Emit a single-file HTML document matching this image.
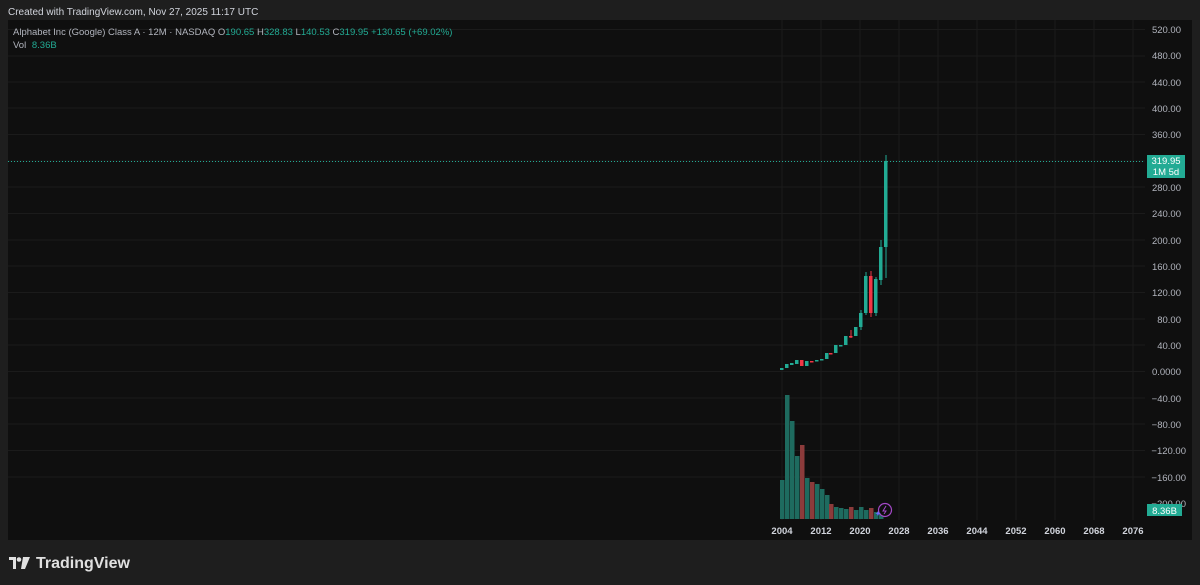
<!DOCTYPE html>
<html><head><style>
html,body{margin:0;padding:0;background:#1e1e1e;width:1200px;height:585px;overflow:hidden;font-family:"Liberation Sans",sans-serif}
</style></head><body>
<svg width="1200" height="585" xmlns="http://www.w3.org/2000/svg" font-family="Liberation Sans, sans-serif">
<rect width="1200" height="585" fill="#1e1e1e"/>
<text x="8" y="15" font-size="10" fill="#d1d4dc">Created with TradingView.com, Nov 27, 2025 11:17 UTC</text>
<rect x="8" y="20" width="1184" height="520" fill="#0f0f0f"/>
<g stroke="#1b1b1b" stroke-width="1">
<line x1="8" y1="29.5" x2="1145" y2="29.5"/><line x1="8" y1="56" x2="1145" y2="56"/><line x1="8" y1="82" x2="1145" y2="82"/><line x1="8" y1="108" x2="1145" y2="108"/><line x1="8" y1="134.5" x2="1145" y2="134.5"/><line x1="8" y1="161" x2="1145" y2="161"/><line x1="8" y1="187" x2="1145" y2="187"/><line x1="8" y1="213.5" x2="1145" y2="213.5"/><line x1="8" y1="240" x2="1145" y2="240"/><line x1="8" y1="266" x2="1145" y2="266"/><line x1="8" y1="292.5" x2="1145" y2="292.5"/><line x1="8" y1="319" x2="1145" y2="319"/><line x1="8" y1="345" x2="1145" y2="345"/><line x1="8" y1="371.5" x2="1145" y2="371.5"/><line x1="8" y1="398" x2="1145" y2="398"/><line x1="8" y1="424" x2="1145" y2="424"/><line x1="8" y1="450.5" x2="1145" y2="450.5"/><line x1="8" y1="477" x2="1145" y2="477"/>
<line x1="782" y1="20" x2="782" y2="520"/><line x1="821" y1="20" x2="821" y2="520"/><line x1="860" y1="20" x2="860" y2="520"/><line x1="899" y1="20" x2="899" y2="520"/><line x1="938" y1="20" x2="938" y2="520"/><line x1="977" y1="20" x2="977" y2="520"/><line x1="1016" y1="20" x2="1016" y2="520"/><line x1="1055" y1="20" x2="1055" y2="520"/><line x1="1094" y1="20" x2="1094" y2="520"/><line x1="1133" y1="20" x2="1133" y2="520"/>
</g>
<text x="13" y="35" font-size="9.5" fill="#b2b5be">Alphabet Inc (Google) Class A · 12M · NASDAQ <tspan>O</tspan><tspan fill="#22ab94">190.65</tspan> H<tspan fill="#22ab94">328.83</tspan> L<tspan fill="#22ab94">140.53</tspan> C<tspan fill="#22ab94">319.95 +130.65 (+69.02%)</tspan></text>
<text x="13" y="48" font-size="9.5" fill="#b2b5be">Vol <tspan fill="#22ab94" dx="3">8.36B</tspan></text>
<g>
<rect x="780" y="480" width="4.5" height="39" fill="#1e6b5f"/>
<rect x="785" y="395" width="4.5" height="124" fill="#1e6b5f"/>
<rect x="790" y="421" width="4.5" height="98" fill="#1e6b5f"/>
<rect x="795" y="456" width="4.5" height="63" fill="#1e6b5f"/>
<rect x="800" y="445" width="4.5" height="74" fill="#8c3b3b"/>
<rect x="805" y="478" width="4.5" height="41" fill="#1e6b5f"/>
<rect x="810" y="482" width="4.5" height="37" fill="#8c3b3b"/>
<rect x="815" y="484" width="4.5" height="35" fill="#1e6b5f"/>
<rect x="820" y="489" width="4.5" height="30" fill="#1e6b5f"/>
<rect x="825" y="495" width="4.5" height="24" fill="#1e6b5f"/>
<rect x="829" y="504" width="4.5" height="15" fill="#8c3b3b"/>
<rect x="834" y="507" width="4.5" height="12" fill="#1e6b5f"/>
<rect x="839" y="508" width="4.5" height="11" fill="#1e6b5f"/>
<rect x="844" y="509" width="4.5" height="10" fill="#1e6b5f"/>
<rect x="849" y="507" width="4.5" height="12" fill="#8c3b3b"/>
<rect x="854" y="510" width="4.5" height="9" fill="#1e6b5f"/>
<rect x="859" y="507" width="4.5" height="12" fill="#1e6b5f"/>
<rect x="864" y="510" width="4.5" height="9" fill="#1e6b5f"/>
<rect x="869" y="508" width="4.5" height="11" fill="#8c3b3b"/>
<rect x="874" y="512" width="4.5" height="7" fill="#1e6b5f"/>
<rect x="879" y="513" width="4.5" height="6" fill="#1e6b5f"/>
</g>
<circle cx="885" cy="510" r="6.5" fill="#0f0f0f" stroke="#a448c8" stroke-width="1.2"/>
<path d="M886 506 L883 511 L886 511 L884 514" stroke="#a448c8" fill="none" stroke-width="1"/>
<path d="M877 513 l1 -2 l1 2 l2 0.5 l-2 0.5 l-1 2 l-1 -2 l-2 -0.5z" fill="#6b6bff"/>
<g>
<rect x="780" y="368" width="3.5" height="2" fill="#22ab94"/>
<rect x="785" y="364" width="3.5" height="4" fill="#22ab94"/>
<rect x="790" y="363" width="3.5" height="2" fill="#22ab94"/>
<rect x="795" y="360" width="3.5" height="4" fill="#22ab94"/>
<rect x="800" y="360" width="3.5" height="6" fill="#f23645"/>
<rect x="805" y="361" width="3.5" height="5" fill="#22ab94"/>
<rect x="810" y="361" width="3.5" height="1.5" fill="#f23645"/>
<rect x="815" y="360" width="3.5" height="1.5" fill="#22ab94"/>
<rect x="820" y="359" width="3.5" height="1.5" fill="#22ab94"/>
<rect x="825" y="353" width="3.5" height="6" fill="#22ab94"/>
<rect x="829" y="353" width="3.5" height="1.5" fill="#f23645"/>
<rect x="834" y="345" width="3.5" height="8" fill="#22ab94"/>
<rect x="839" y="345" width="3.5" height="1.5" fill="#22ab94"/>
<rect x="844" y="336" width="3.5" height="9" fill="#22ab94"/>
<rect x="849" y="336" width="3.5" height="1.5" fill="#f23645"/>
<line x1="851" y1="330" x2="851" y2="338" stroke="#f23645"/>
<rect x="854" y="327" width="3.5" height="9" fill="#22ab94"/>
<rect x="859" y="313" width="3.5" height="14" fill="#22ab94"/>
<line x1="861" y1="310" x2="861" y2="330" stroke="#22ab94"/>
<rect x="864" y="276" width="3.5" height="37" fill="#22ab94"/>
<line x1="866" y1="272" x2="866" y2="315" stroke="#22ab94"/>
<rect x="869" y="276" width="3.5" height="37" fill="#f23645"/>
<line x1="871" y1="271" x2="871" y2="317" stroke="#f23645"/>
<rect x="874" y="279" width="3.5" height="34" fill="#22ab94"/>
<line x1="876" y1="277" x2="876" y2="316" stroke="#22ab94"/>
<rect x="879" y="247" width="3.5" height="33" fill="#22ab94"/>
<line x1="881" y1="240" x2="881" y2="285" stroke="#22ab94"/>
<rect x="884" y="161" width="3.5" height="86" fill="#22ab94"/>
<line x1="886" y1="155" x2="886" y2="278" stroke="#22ab94"/>
</g>
<line x1="8" y1="161.5" x2="1145" y2="161.5" stroke="#22ab94" stroke-dasharray="1 2" stroke-width="1"/>
<g font-size="9.5" fill="#b2b5be" text-anchor="end">
<text x="1181" y="33">520.00</text><text x="1181" y="59">480.00</text><text x="1181" y="86">440.00</text>
<text x="1181" y="112">400.00</text><text x="1181" y="138">360.00</text>
<text x="1181" y="191">280.00</text><text x="1181" y="217">240.00</text><text x="1181" y="244">200.00</text>
<text x="1181" y="270">160.00</text><text x="1181" y="296">120.00</text><text x="1181" y="323">80.00</text>
<text x="1181" y="349">40.00</text><text x="1181" y="375">0.0000</text><text x="1181" y="402">−40.00</text>
<text x="1181" y="428">−80.00</text><text x="1186" y="454">−120.00</text><text x="1186" y="481">−160.00</text><text x="1186" y="507">−200.00</text>
</g>
<rect x="1147" y="155" width="38" height="23" fill="#22ab94"/>
<text x="1166" y="164" font-size="9.5" fill="#fff" text-anchor="middle">319.95</text>
<text x="1166" y="175" font-size="9.5" fill="#fff" text-anchor="middle">1M 5d</text>
<rect x="1147" y="504" width="35" height="12" fill="#22ab94"/>
<text x="1164.5" y="514" font-size="9.5" fill="#fff" text-anchor="middle">8.36B</text>
<g font-size="9.5" fill="#d1d4dc" text-anchor="middle" font-weight="bold">
<text x="782" y="534">2004</text><text x="821" y="534">2012</text><text x="860" y="534">2020</text><text x="899" y="534">2028</text><text x="938" y="534">2036</text><text x="977" y="534">2044</text><text x="1016" y="534">2052</text><text x="1055" y="534">2060</text><text x="1094" y="534">2068</text><text x="1133" y="534">2076</text>
</g>
<g fill="#e0e0e0">
<path d="M9 557 h7 v12 h-3 v-9 h-4z"/>
<circle cx="19" cy="559.5" r="2.3"/>
<path d="M23 557 h7 l-5 12 h-4z"/>
</g>
<text x="36" y="568" font-size="16" font-weight="bold" fill="#e0e0e0">TradingView</text>
</svg>
</body></html>
